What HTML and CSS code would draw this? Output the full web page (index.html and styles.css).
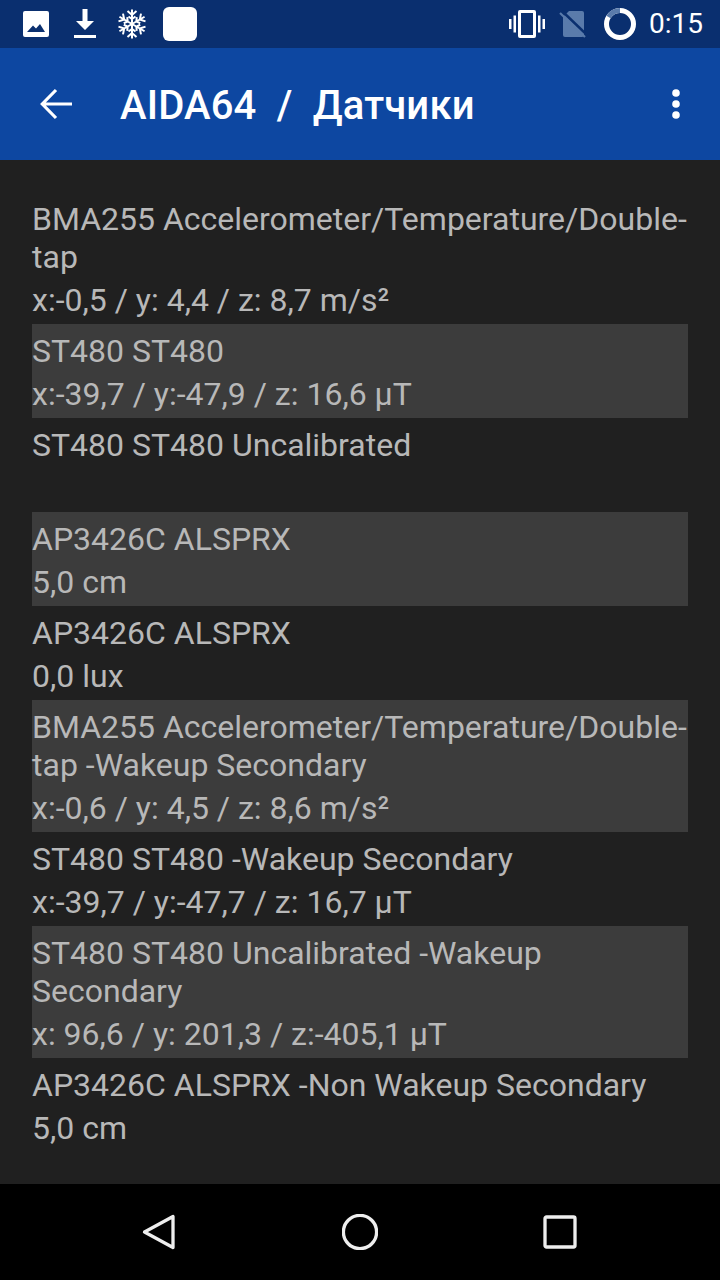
FILE: index.html
```html
<!DOCTYPE html>
<html lang="ru">
<head>
<meta charset="utf-8">
<title>AIDA64 / Датчики</title>
<link rel="stylesheet" href="styles.css">
</head>
<body>
<div class="screen">
  <header class="status">
    <div class="status-left">
      <svg class="i-image" viewBox="0 0 26 26"><path fill="#fff" fill-rule="evenodd" d="M2 0h22a2 2 0 0 1 2 2v22a2 2 0 0 1-2 2H2a2 2 0 0 1-2-2V2a2 2 0 0 1 2-2zM4 21h18l-5-8-4 4.500-3-3z"/></svg>
      <svg class="i-download" viewBox="0 0 24 30"><path fill="#fff" d="M9.500 0h5v12h6.500L12 21 3 12h6.500zM1 26h22v3H1z"/></svg>
      <svg class="i-snow" viewBox="-15 -15 30 30">
        <defs><path id="arm" d="M0 0V-14.500M-4.500-13L0-9 4.500-13M-3.500-7.500L0-5 3.500-7.500" fill="none" stroke="#fff" stroke-width="2"/></defs>
        <use href="#arm"/><use href="#arm" transform="rotate(60)"/><use href="#arm" transform="rotate(120)"/><use href="#arm" transform="rotate(180)"/><use href="#arm" transform="rotate(240)"/><use href="#arm" transform="rotate(300)"/>
      </svg>
      <div class="blank"></div>
    </div>
    <div class="status-right">
      <svg class="i-vib" viewBox="0 0 36 28"><path fill="#fff" fill-rule="evenodd" d="M11 0h14a2 2 0 0 1 2 2v24a2 2 0 0 1-2 2H11a2 2 0 0 1-2-2V2a2 2 0 0 1 2-2zm1 3v22h12V3zM0 9h2.500v10H0zM33.500 9H36v10h-2.500zM4.500 5.500H7v17H4.500zM29 5.500h2.500v17H29z"/></svg>
      <svg class="i-sim" viewBox="0 0 27 28"><path fill="#5a7bab" d="M10 1h13a2 2 0 0 1 2 2v22a2 2 0 0 1-2 2H6a2 2 0 0 1-2-2V7z"/><path stroke="#0a2f6f" stroke-width="2.500" d="M3 1L28 25"/><path stroke="#5a7bab" stroke-width="2.200" d="M1 3L26 27"/></svg>
      <svg class="i-ring" viewBox="0 0 32 32"><circle cx="16" cy="16" r="13.500" fill="none" stroke="#fff" stroke-width="5"/><path d="M16 2.500A13.500 13.500 0 0 0 4.500 9" fill="none" stroke="#5a7bab" stroke-width="5"/></svg>
      <span class="clock">0:15</span>
    </div>
  </header>
  <div class="toolbar">
    <svg class="i-back" viewBox="0 0 32 32"><path fill="none" stroke="#fff" stroke-width="3.200" d="M32 16H3M16 2L2.300 16 16 30"/></svg>
    <h1 class="title">AIDA64 &nbsp;/&nbsp; Датчики</h1>
    <svg class="i-more" viewBox="0 0 8 30"><circle cx="4" cy="4" r="3.800" fill="#fff"/><circle cx="4" cy="15" r="3.800" fill="#fff"/><circle cx="4" cy="26" r="3.800" fill="#fff"/></svg>
  </div>
  <main class="list">
    <div class="row"><div class="name">BMA255 Accelerometer/Temperature/Double-tap</div><div class="val">x:-0,5 / y: 4,4 / z: 8,7 m/s²</div></div>
    <div class="row alt"><div class="name">ST480 ST480</div><div class="val">x:-39,7 / y:-47,9 / z: 16,6 µT</div></div>
    <div class="row"><div class="name">ST480 ST480 Uncalibrated</div><div class="val">&nbsp;</div></div>
    <div class="row alt"><div class="name">AP3426C ALSPRX</div><div class="val">5,0 cm</div></div>
    <div class="row"><div class="name">AP3426C ALSPRX</div><div class="val">0,0 lux</div></div>
    <div class="row alt"><div class="name">BMA255 Accelerometer/Temperature/Double-tap -Wakeup Secondary</div><div class="val">x:-0,6 / y: 4,5 / z: 8,6 m/s²</div></div>
    <div class="row"><div class="name">ST480 ST480 -Wakeup Secondary</div><div class="val">x:-39,7 / y:-47,7 / z: 16,7 µT</div></div>
    <div class="row alt"><div class="name">ST480 ST480 Uncalibrated -Wakeup Secondary</div><div class="val">x: 96,6 / y: 201,3 / z:-405,1 µT</div></div>
    <div class="row"><div class="name">AP3426C ALSPRX -Non Wakeup Secondary</div><div class="val">5,0 cm</div></div>
  </main>
  <nav class="nav">
    <div class="nav-cell"><svg class="i-nav" viewBox="0 0 36 36"><path fill="none" stroke="#eee" stroke-width="3.300" stroke-linejoin="round" d="M31 2.500V33.500L2.500 18z"/></svg></div>
    <div class="nav-cell"><svg class="i-nav" viewBox="0 0 36 36"><circle cx="18" cy="18" r="16.600" fill="none" stroke="#eee" stroke-width="3.300"/></svg></div>
    <div class="nav-cell"><svg class="i-nav" viewBox="0 0 36 36"><rect x="3" y="3" width="30" height="30" rx="1.500" fill="none" stroke="#eee" stroke-width="3.300"/></svg></div>
  </nav>
</div>
</body>
</html>
```
FILE: styles.css
```css
* { box-sizing: border-box; }
html, body { margin: 0; padding: 0; }
body { font-family: Roboto, "Liberation Sans", sans-serif; background: #202020; }
svg { display: block; flex: none; }
.screen { width: 720px; height: 1280px; display: flex; flex-direction: column; overflow: hidden; }

.status { height: 48px; flex: none; background: #0a2f6f; display: flex; justify-content: space-between; align-items: center; padding: 0 17px 0 23px; }
.status-left, .status-right { display: flex; align-items: center; }
.i-image { width: 26px; height: 26px; margin-right: 24px; }
.i-download { width: 24px; height: 30px; margin-right: 20px; }
.i-snow { width: 30px; height: 30px; margin-right: 16px; }
.blank { width: 34px; height: 34px; background: #fff; border-radius: 6px; }
.i-vib { width: 36px; height: 28px; margin-right: 14px; }
.i-sim { width: 27px; height: 28px; margin-right: 18px; }
.i-ring { width: 32px; height: 32px; margin-right: 13px; }
.clock { color: #fff; font-size: 28px; line-height: 48px; }

.toolbar { height: 112px; flex: none; background: #0d47a1; display: flex; align-items: center; padding: 0 40px; }
.i-back { width: 32px; height: 32px; margin-right: 48px; }
.title { flex: 1; margin: 0; padding-top: 4px; color: #fff; font-size: 40px; font-weight: 500; letter-spacing: 0.16px; line-height: 108px; white-space: nowrap; }
.i-more { width: 8px; height: 30px; margin-right: 0; }

.list { flex: 1; padding: 32px 32px 0; }
.row { padding: 8px 0 5px; }
.alt { background: #3c3c3c; }
.name, .val { color: #b8b8b8; font-size: 32px; line-height: 38px; }
.val { margin-top: 5px; }

.nav { height: 96px; flex: none; background: #000; display: flex; align-items: center; padding: 0 60px; }
.nav-cell { flex: 1; display: flex; justify-content: center; }
.i-nav { width: 36px; height: 36px; }
```
